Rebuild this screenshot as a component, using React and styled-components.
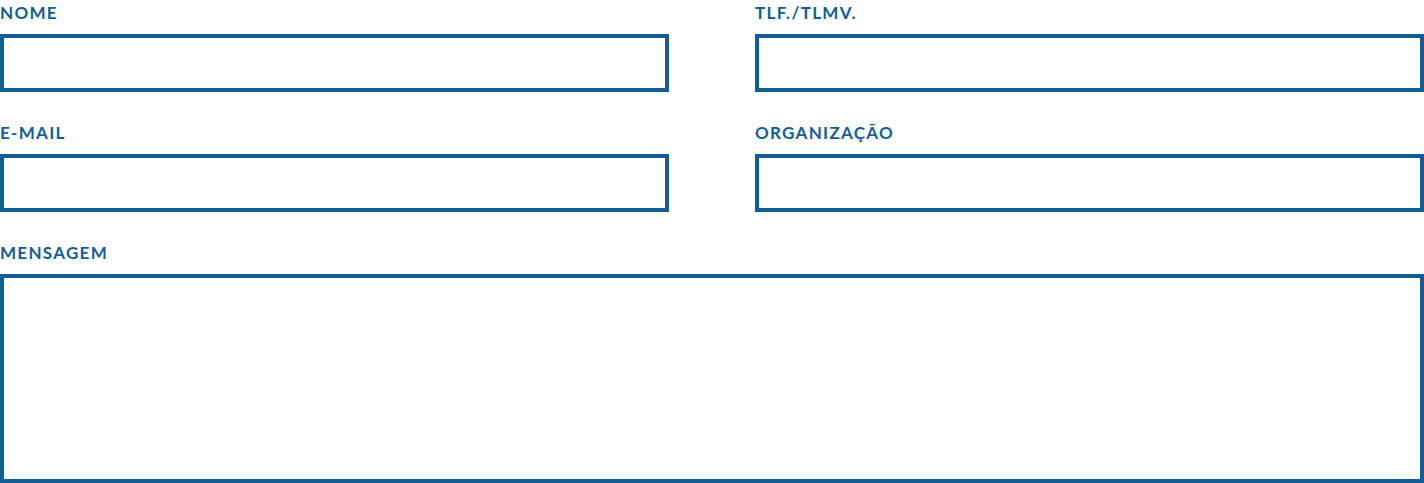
import styled, { createGlobalStyle } from 'styled-components';

const GlobalStyle = createGlobalStyle`
  html, body {
    margin: 0;
    padding: 0;
    background: #ffffff;
  }
  body {
    font-family: Lato, "Open Sans", sans-serif;
  }
`;

const Form = styled.form`
  display: grid;
  grid-template-columns: 1fr 1fr;
  column-gap: 86px;
  width: 1424px;
`;

const Field = styled.div`
  display: flex;
  flex-direction: column;
  margin-bottom: 28px;
  grid-column: ${(props) => (props.wide ? '1 / -1' : 'auto')};
`;

const Label = styled.label`
  font-size: 17px;
  line-height: 26px;
  font-weight: 700;
  color: #125d93;
  margin-bottom: 8px;
  letter-spacing: 1.3px;
`;

const Input = styled.input`
  box-sizing: border-box;
  height: 58px;
  border: 4px solid #125d93;
  border-radius: 0;
  padding: 0 14px;
  font-size: 17px;
  font-family: inherit;
  outline: none;
  background: #fff;
`;

const TextArea = styled.textarea`
  box-sizing: border-box;
  height: 209px;
  border: 4px solid #125d93;
  border-radius: 0;
  padding: 14px;
  font-size: 17px;
  font-family: inherit;
  outline: none;
  resize: none;
  display: block;
`;

const MessageField = styled(Field)`
  margin-bottom: 0;
`;

const App = () => {
  return (
    <>
      <GlobalStyle />
      <Form>
        <Field>
          <Label>NOME</Label>
          <Input type="text" />
        </Field>
        <Field>
          <Label>TLF./TLMV.</Label>
          <Input type="tel" />
        </Field>
        <Field>
          <Label>E-MAIL</Label>
          <Input type="email" />
        </Field>
        <Field>
          <Label>ORGANIZAÇÃO</Label>
          <Input type="text" />
        </Field>
        <MessageField wide>
          <Label>MENSAGEM</Label>
          <TextArea />
        </MessageField>
      </Form>
    </>
  );
};

export default App;
